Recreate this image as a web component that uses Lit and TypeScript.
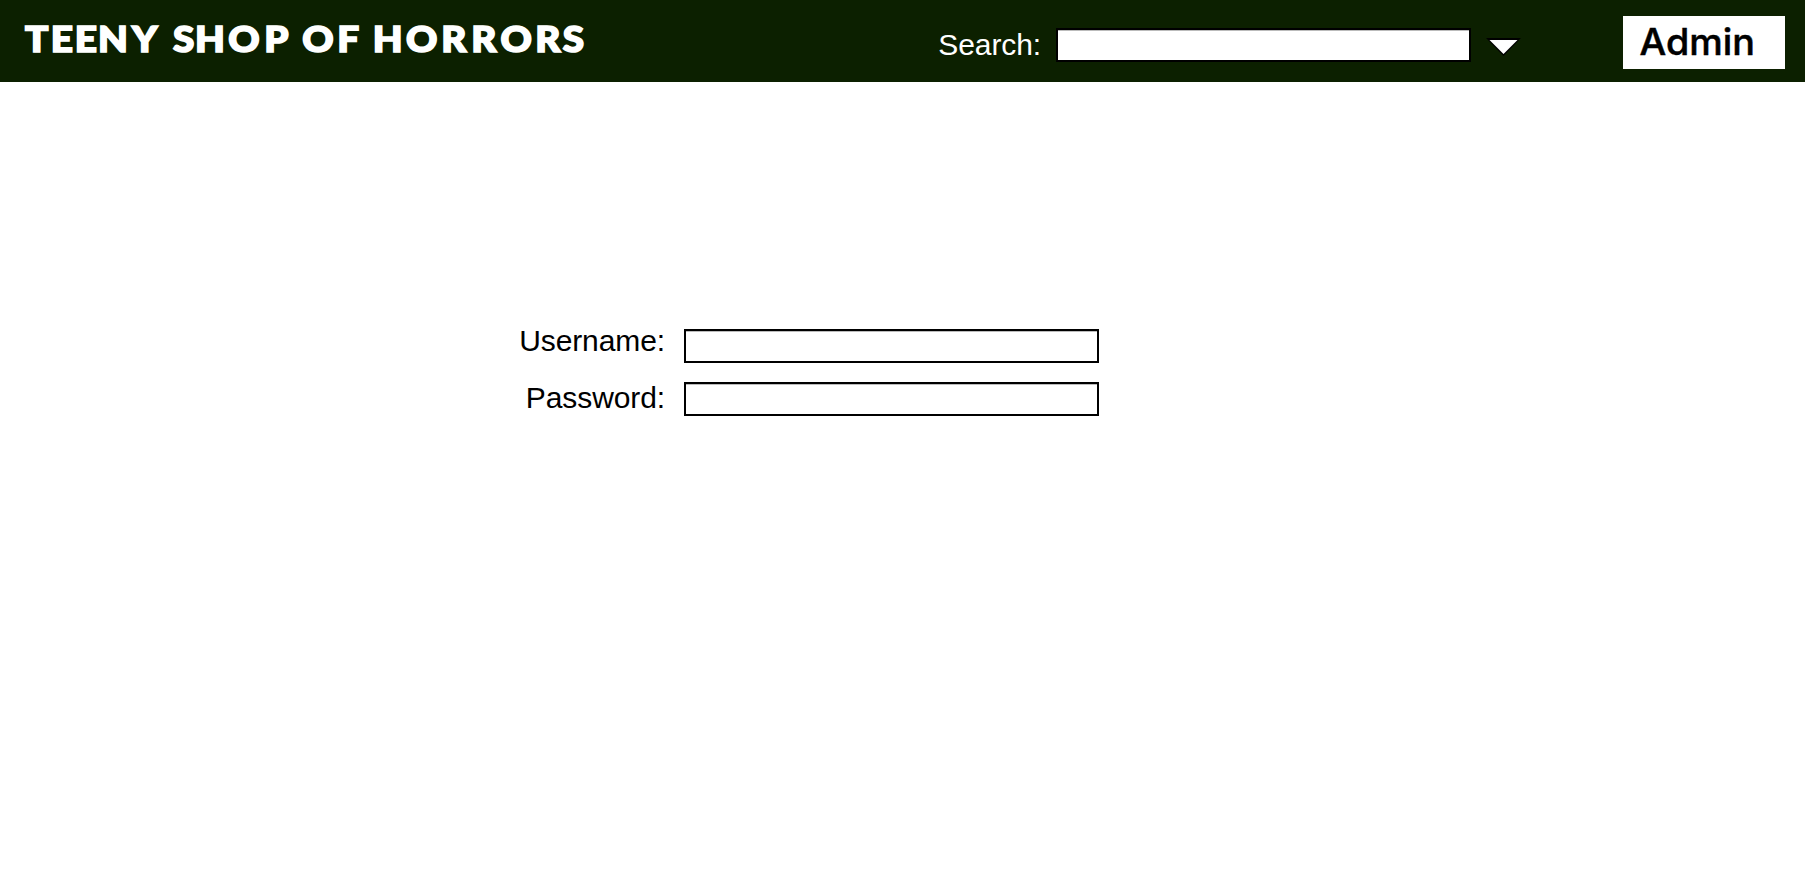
import { LitElement, html, css } from "lit";
import { customElement } from "lit/decorators.js";

const TITLE = "TEENY SHOP OF HORRORS";
const TITLE_STRETCH = 1.06;
const TITLE_STOPS = [
  25, 50.7, 74.8, 98, 132, 157, 173, 195, 228.3, 264.3, 288, 302.3, 337.3, 357,
  372.7, 406, 441.3, 471.3, 500.5, 535.3, 562.8,
]
  .map((x) => (x / TITLE_STRETCH).toFixed(1))
  .join(" ");

@customElement("app-root")
export class AppRoot extends LitElement {
  static styles = css`
    :host {
      display: block;
      min-height: 100vh;
      background: #fff;
      font-family: "Liberation Sans", Arial, sans-serif;
      font-size: 30px;
      line-height: 34px;
      color: #000;
    }
    .bar {
      display: flex;
      align-items: flex-start;
      box-sizing: border-box;
      height: 82px;
      padding-right: 20px;
      background: #0c2000;
      color: #fff;
    }
    .brand {
      display: block;
      flex: none;
      width: 600px;
      height: 82px;
      font-family: Lato, sans-serif;
      font-weight: 900;
      font-size: 36.5px;
      fill: #fff;
      stroke: #fff;
      stroke-width: 1.7;
    }
    .search {
      display: flex;
      align-items: flex-start;
      margin-left: auto;
      margin-right: 101px;
      padding-top: 28px;
    }
    .search label { margin-right: 15px; letter-spacing: -0.1px; }
    input {
      box-sizing: border-box;
      width: 415px;
      height: 34px;
      margin: 0;
      padding: 0 6px;
      border: 2px solid #000;
      border-radius: 0;
      background: #fff;
      box-shadow: inset 0 1px #bbb;
      font: 22px "Liberation Sans", Arial, sans-serif;
      outline: none;
    }
    .arrow { display: block; width: 36px; height: 18px; margin: 10px 0 0 15px; }
    .admin {
      flex: none;
      width: 162px;
      height: 53px;
      margin-top: 16px;
      background: #fff;
    }
    .admin svg { display: block; }
    .admin text {
      font-family: Inter, sans-serif;
      font-weight: 500;
      font-size: 37px;
      stroke: #000;
      stroke-width: 0.5;
    }
    .login {
      display: grid;
      grid-template-columns: 665px 415px;
      column-gap: 19px;
      row-gap: 19px;
      padding-top: 247px;
      align-items: start;
    }
    .login label { text-align: right; height: 34px; letter-spacing: -0.1px; }
    .user { margin-top: -5px; }
    .pass { margin-top: -1px; }
  `;

  render() {
    return html`
      <header class="bar">
        <svg class="brand" viewBox="0 0 600 82" role="heading">
          <text transform="scale(${TITLE_STRETCH} 1)" y="52.5" x=${TITLE_STOPS}>${TITLE}</text>
        </svg>
        <div class="search">
          <label for="q">Search:</label>
          <input id="q" type="text" />
          <svg class="arrow" viewBox="0 0 36 18">
            <path d="M0 0H35L17.5 18Z" fill="#000" />
            <path d="M3.5 2H31.5L17.5 16Z" fill="#fff" />
          </svg>
        </div>
        <div class="admin">
          <svg width="162" height="53" viewBox="0 0 162 53">
            <text x="16.5" y="38.8" textLength="115.5" lengthAdjust="spacingAndGlyphs">Admin</text>
          </svg>
        </div>
      </header>
      <form class="login">
        <label class="user" for="user">Username:</label>
        <input id="user" type="text" />
        <label class="pass" for="pass">Password:</label>
        <input id="pass" type="password" />
      </form>
    `;
  }
}
